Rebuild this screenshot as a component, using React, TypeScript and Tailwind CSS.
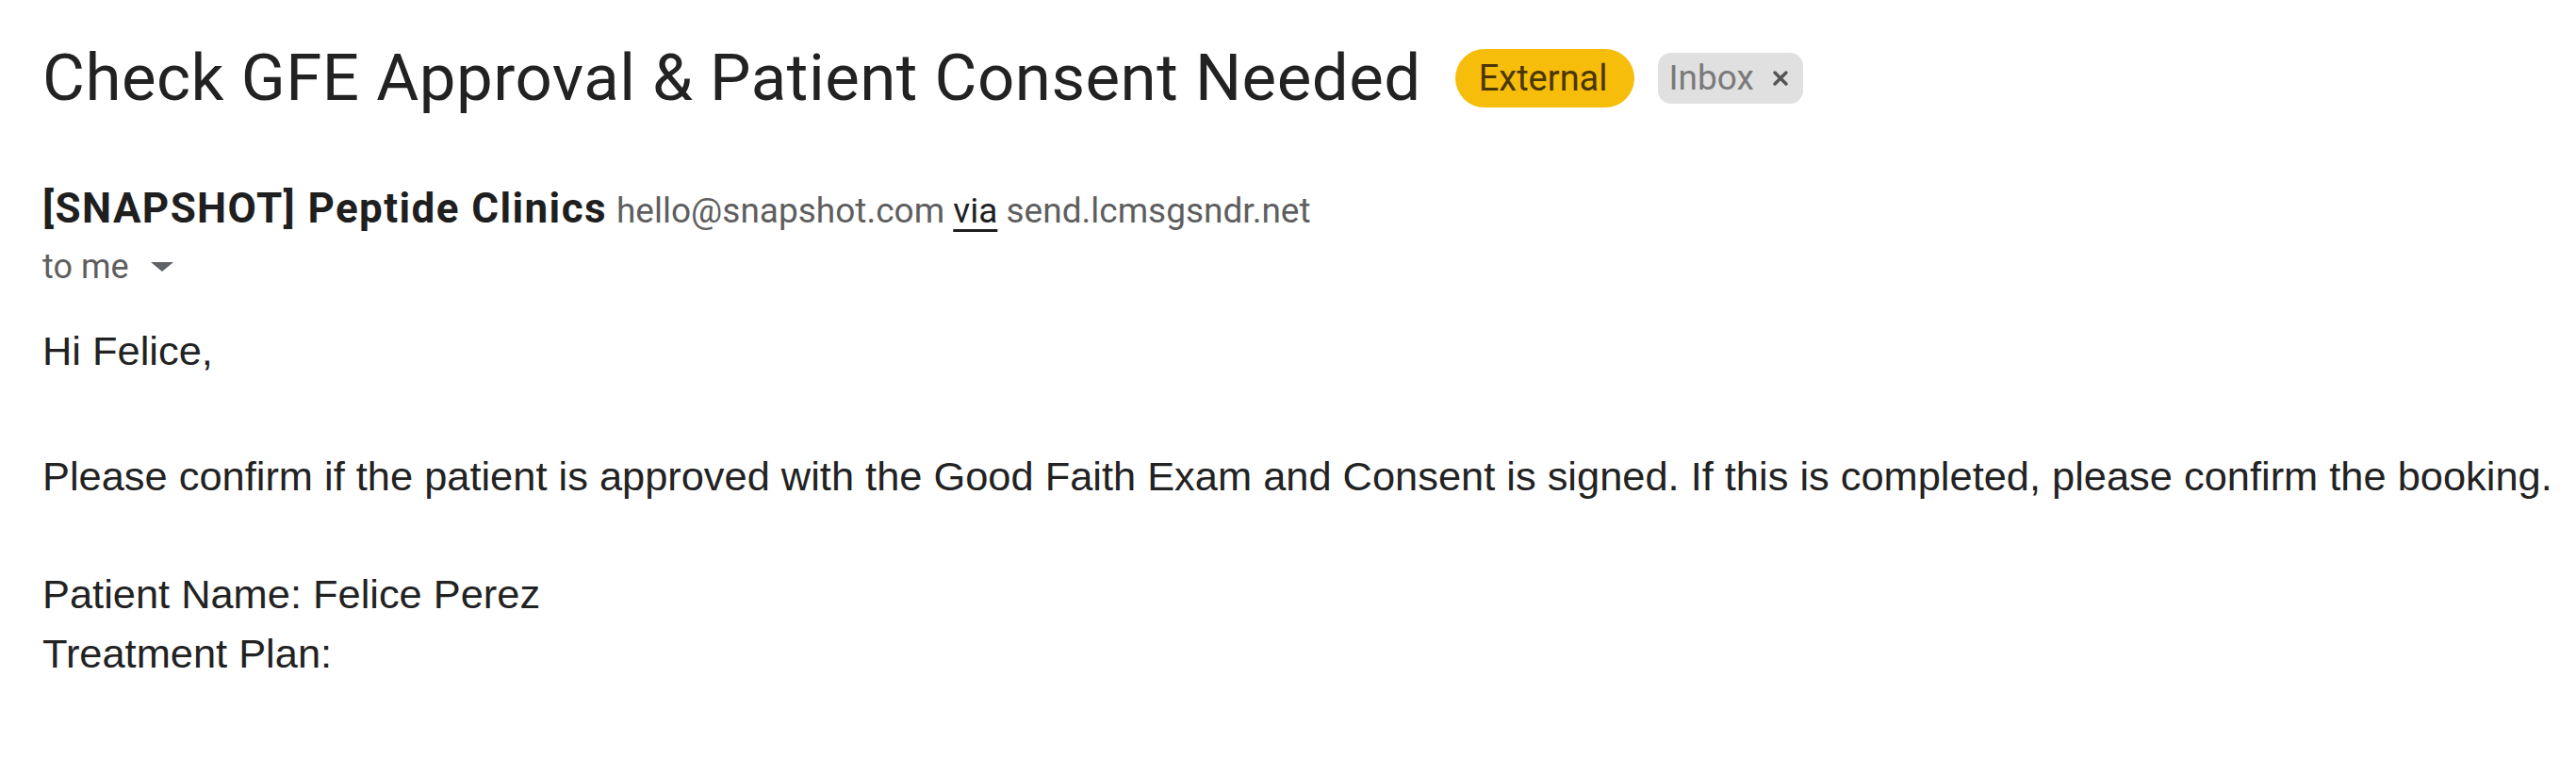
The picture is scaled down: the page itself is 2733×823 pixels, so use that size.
import React from "react";

const sans = { fontFamily: "Roboto, 'Liberation Sans', Arial, sans-serif" };
const body = { fontFamily: "'Liberation Sans', Arial, sans-serif" };

function Caret() {
  return (
    <svg width="26" height="12" viewBox="0 0 26 12" className="ml-[22px]">
      <polygon points="1,1 25,1 13,11" fill="#5f6368" />
    </svg>
  );
}

function CloseX() {
  return (
    <svg width="20" height="20" viewBox="0 0 20 20" className="ml-[18px]">
      <path d="M4 4 L16 16 M16 4 L4 16" stroke="#555" strokeWidth="3.5" strokeLinecap="round" />
    </svg>
  );
}

export default function App() {
  return (
    <div className="min-h-screen w-full bg-white pl-[45px] pt-[49px] text-[#222]">
      <div className="flex items-center">
        <h1 className="text-[69px] leading-[68px] font-normal tracking-[0.5px] text-[#222]" style={sans}>
          Check GFE Approval &amp; Patient Consent Needed
        </h1>
        <span
          className="ml-[36px] flex h-[62px] items-center rounded-full bg-[#f6bd0a] pl-[25px] pr-[28px] text-[38px] text-[#4a3600]"
          style={sans}
        >
          External
        </span>
        <span
          className="ml-[25px] flex h-[54px] items-center rounded-[14px] bg-[#e0e0e0] pl-[12px] pr-[14px] text-[37px] text-[#7a7a7a]"
          style={sans}
        >
          Inbox
          <CloseX />
        </span>
      </div>

      <div className="mt-[78px] flex items-baseline leading-[52px]" style={sans}>
        <span className="text-[44px] font-bold tracking-[1.4px] text-[#1f1f1f]">[SNAPSHOT] Peptide Clinics</span>
        <span className="ml-[10px] text-[37px] text-[#5e5e5e]">
          hello@snapshot.com <span className="text-[#1f1f1f] underline underline-offset-[7px]">via</span>{" "}
          send.lcmsgsndr.net
        </span>
      </div>

      <div className="mt-[11px] flex items-center text-[36px] leading-[44px] text-[#5e5e5e]" style={sans}>
        to me
        <Caret />
      </div>

      <div className="text-[43.4px] leading-[63px] text-[#222]" style={body}>
        <p className="mt-[36px]">Hi Felice,</p>
        <p className="mt-[70px]">
          Please confirm if the patient is approved with the Good Faith Exam and Consent is signed. If this is
          completed, please confirm the booking.
        </p>
        <p className="mt-[62px]">Patient Name: Felice Perez</p>
        <p>Treatment Plan:</p>
      </div>
    </div>
  );
}
